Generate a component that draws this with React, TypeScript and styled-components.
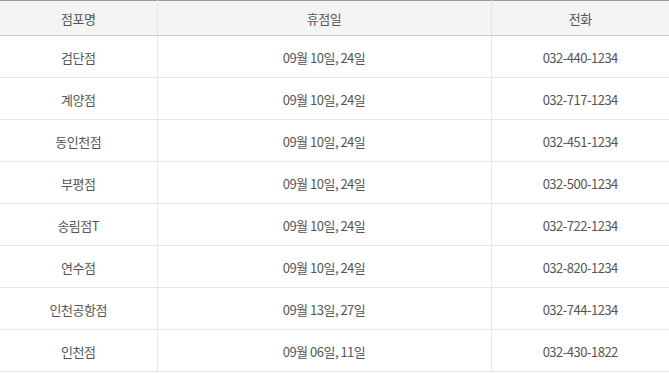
import * as React from 'react'
import styled, { createGlobalStyle } from 'styled-components'

const stores = [
  { name: '검단점', off: '09월 10일, 24일', tel: '032-440-1234' },
  { name: '계양점', off: '09월 10일, 24일', tel: '032-717-1234' },
  { name: '동인천점', off: '09월 10일, 24일', tel: '032-451-1234' },
  { name: '부평점', off: '09월 10일, 24일', tel: '032-500-1234' },
  { name: '송림점T', off: '09월 10일, 24일', tel: '032-722-1234' },
  { name: '연수점', off: '09월 10일, 24일', tel: '032-820-1234' },
  { name: '인천공항점', off: '09월 13일, 27일', tel: '032-744-1234' },
  { name: '인천점', off: '09월 06일, 11일', tel: '032-430-1822' },
]

function App() {
  return (
    <>
      <GlobalStyle />
      <Table>
        <colgroup>
          <col width="157" />
          <col width="334" />
          <col />
        </colgroup>
        <thead>
          <tr>
            <Th>점포명</Th>
            <Th>휴점일</Th>
            <Th last>전화</Th>
          </tr>
        </thead>
        <tbody>
          {stores.map((s) => (
            <tr key={s.name}>
              <Td>{s.name}</Td>
              <Td>{s.off}</Td>
              <Td last>{s.tel}</Td>
            </tr>
          ))}
        </tbody>
      </Table>
    </>
  )
}

const GlobalStyle = createGlobalStyle`
  body {
    margin: 0;
    background: #fff;
    font-family: "Noto Sans CJK KR", "Noto Sans", sans-serif;
  }
`

const Table = styled.table`
  width: 669px;
  border-collapse: collapse;
  table-layout: fixed;
  border-top: 1px solid #999;
  border-bottom: 1px solid #999;
  font-size: 13px;
  letter-spacing: -0.5px;
`

const Th = styled.th<{ last?: boolean }>`
  height: 34px;
  padding: 0;
  background: #f4f4f4;
  color: #555;
  font-weight: normal;
  text-align: center;
  border-bottom: 1px solid #ccc;
  border-right: ${(p) => (p.last ? 'none' : '1px solid #e6e6e6')};
`

const Td = styled.td<{ last?: boolean }>`
  height: 42px;
  padding: 2px 0 0;
  box-sizing: border-box;
  color: #555;
  text-align: center;
  border-bottom: 1px solid #e6e6e6;
  border-right: ${(p) => (p.last ? 'none' : '1px solid #e6e6e6')};
`

export default App
